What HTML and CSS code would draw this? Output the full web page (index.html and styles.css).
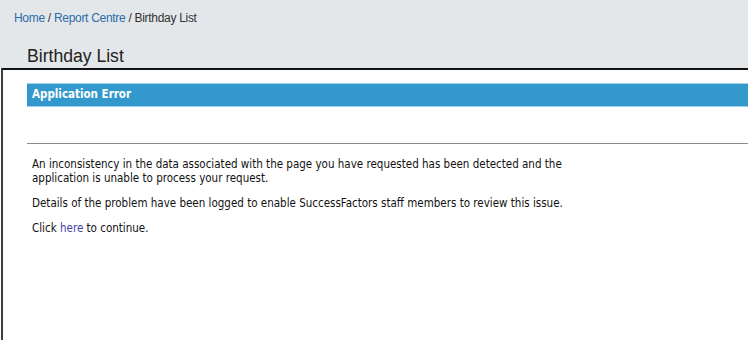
FILE: index.html
```html
<!DOCTYPE html>
<html lang="en">
<head>
    <meta charset="UTF-8">
    <meta name="viewport" content="width=device-width, initial-scale=1.0">
    <title>Birthday List</title>
    <link rel="stylesheet" href="styles.css">
</head>
<body>

<div class="page-header">
    <div class="breadcrumb">
        <a href="#">Home</a> / <a href="#">Report Centre</a> / <span>Birthday List</span>
    </div>
    <h1>Birthday List</h1>
</div>

<div class="frame">
    <div class="error-bar">Application Error</div>
    <div class="error-spacer"></div>
    <hr class="error-rule">
    <div class="error-body">
        <p>An inconsistency in the data associated with the page you have requested has been detected and the<br>
        application is unable to process your request.</p>
        <p>Details of the problem have been logged to enable SuccessFactors staff members to review this issue.</p>
        <p>Click <a href="#">here</a> to continue.</p>
    </div>
</div>

</body>
</html>
```

FILE: styles.css
```css
body {
    margin: 0;
    background-color: #ffffff;
    color: #222222;
    overflow: hidden;
}
.page-header {
    background-color: #e4e7ea;
    height: 68px;
    font-family: "Liberation Sans", Arial, sans-serif;
}
.breadcrumb {
    padding: 10px 0 0 14px;
    font-size: 12px;
    letter-spacing: -0.3px;
    color: #333333;
    line-height: 16px;
}
.breadcrumb a {
    color: #2a6ca8;
    text-decoration: none;
}
h1 {
    margin: 0;
    padding: 20px 0 0 27px;
    font-size: 17.6px;
    font-weight: normal;
    color: #222222;
    line-height: 20px;
}
.frame {
    margin-left: 1px;
    height: 257px;
    border-top: 2px solid #111111;
    border-left: 2px solid #3c3f40;
    padding: 13px 0 0 24px;
    font-family: "DejaVu Sans", Verdana, sans-serif;
    font-stretch: condensed;
    font-size: 11.5px;
}
.error-bar {
    background-color: #3399cc;
    border-top: 1px solid #9fd0ec;
    border-bottom: 1px solid #9fd0ec;
    color: #ffffff;
    font-weight: bold;
    height: 22px;
    line-height: 21px;
    padding-left: 5px;
}
.error-spacer {
    height: 36px;
}
.error-rule {
    margin: 0;
    border: none;
    border-top: 1px solid #8a8a8a;
    height: 0;
}
.error-body {
    padding: 13px 0 0 5px;
    color: #111111;
}
.error-body p {
    margin: 0 0 11px 0;
    line-height: 14px;
}
.error-body a {
    color: #4a3fa3;
    text-decoration: none;
}
```
